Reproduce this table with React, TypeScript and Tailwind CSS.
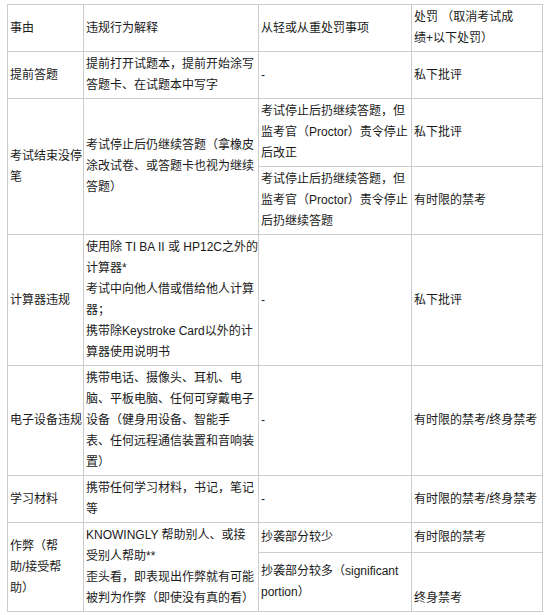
import React from "react";

const L = ({ lines }: { lines: string[] }) => (
  <>
    {lines.map((l, i) => (
      <div key={i} className="whitespace-nowrap">
        {l}
      </div>
    ))}
  </>
);

const td =
  "border border-[#cccccc] px-[2px] py-[2px] align-middle text-left font-normal whitespace-nowrap";

export default function App() {
  return (
    <div
      className="bg-white w-[549px] h-[615px] overflow-hidden pl-[7px] pt-[4px] text-[12px] leading-[21px] text-[#1a1a1a]"
      style={{ fontFamily: '"Liberation Sans", "Noto Sans CJK SC", sans-serif' }}
    >
      <table className="border-collapse table-fixed w-[535px]">
        <colgroup>
          <col className="w-[76px]" />
          <col className="w-[175px]" />
          <col className="w-[153px]" />
          <col className="w-[131px]" />
        </colgroup>
        <tbody>
          <tr className="h-[47px]">
            <td className={td}>事由</td>
            <td className={td}>违规行为解释</td>
            <td className={td}>从轻或从重处罚事项</td>
            <td className={td}>
              <L lines={["处罚 （取消考试成", "绩+以下处罚）"]} />
            </td>
          </tr>
          <tr className="h-[47px]">
            <td className={td}>提前答题</td>
            <td className={td}>
              <L lines={["提前打开试题本，提前开始涂写", "答题卡、在试题本中写字"]} />
            </td>
            <td className={td}>-</td>
            <td className={td}>私下批评</td>
          </tr>
          <tr className="h-[68px]">
            <td className={td} rowSpan={2}>
              <L lines={["考试结束没停", "笔"]} />
            </td>
            <td className={td} rowSpan={2}>
              <L
                lines={[
                  "考试停止后仍继续答题（拿橡皮",
                  "涂改试卷、或答题卡也视为继续",
                  "答题）",
                ]}
              />
            </td>
            <td className={td}>
              <L
                lines={[
                  "考试停止后扔继续答题，但",
                  "监考官（Proctor）责令停止",
                  "后改正",
                ]}
              />
            </td>
            <td className={td}>私下批评</td>
          </tr>
          <tr className="h-[68px]">
            <td className={td}>
              <L
                lines={[
                  "考试停止后扔继续答题，但",
                  "监考官（Proctor）责令停止",
                  "后扔继续答题",
                ]}
              />
            </td>
            <td className={td}>有时限的禁考</td>
          </tr>
          <tr className="h-[131px]">
            <td className={td}>计算器违规</td>
            <td className={td}>
              <L
                lines={[
                  "使用除 TI BA II 或 HP12C之外的",
                  "计算器*",
                  "考试中向他人借或借给他人计算",
                  "器；",
                  "携带除Keystroke Card以外的计",
                  "算器使用说明书",
                ]}
              />
            </td>
            <td className={td}>-</td>
            <td className={td}>私下批评</td>
          </tr>
          <tr className="h-[110px]">
            <td className={td}>电子设备违规</td>
            <td className={td}>
              <L
                lines={[
                  "携带电话、摄像头、耳机、电",
                  "脑、平板电脑、任何可穿戴电子",
                  "设备（健身用设备、智能手",
                  "表、任何远程通信装置和音响装",
                  "置）",
                ]}
              />
            </td>
            <td className={td}>-</td>
            <td className={td}>有时限的禁考/终身禁考</td>
          </tr>
          <tr className="h-[47px]">
            <td className={td}>学习材料</td>
            <td className={td}>
              <L lines={["携带任何学习材料，书记，笔记", "等"]} />
            </td>
            <td className={td}>-</td>
            <td className={td}>有时限的禁考/终身禁考</td>
          </tr>
          <tr className="h-[30px]">
            <td className={td} rowSpan={2}>
              <L lines={["作弊（帮", "助/接受帮", "助）"]} />
            </td>
            <td className={td} rowSpan={2}>
              <L
                lines={[
                  "KNOWINGLY 帮助别人、或接",
                  "受别人帮助**",
                  "歪头看，即表现出作弊就有可能",
                  "被判为作弊（即使没有真的看）",
                ]}
              />
            </td>
            <td className={td}>抄袭部分较少</td>
            <td className={td}>有时限的禁考</td>
          </tr>
          <tr className="h-[59px]">
            <td className={td}>
              <L lines={["抄袭部分较多（significant", "portion）"]} />
            </td>
            <td className={`${td} !align-bottom`}>终身禁考</td>
          </tr>
        </tbody>
      </table>
    </div>
  );
}
